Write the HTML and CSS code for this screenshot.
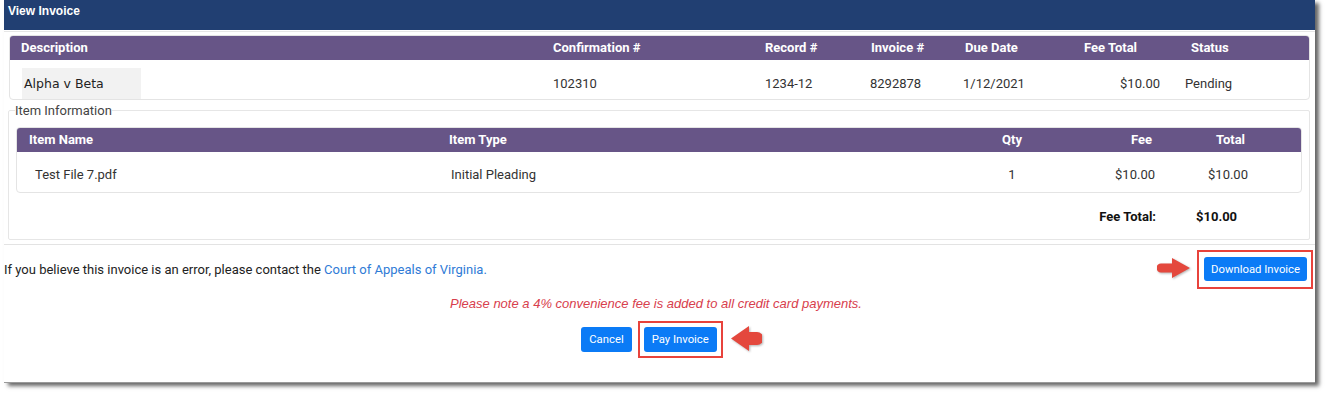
FILE: index.html
```html
<!DOCTYPE html>
<html lang="en">
<head>
    <meta charset="UTF-8">
    <meta name="viewport" content="width=device-width, initial-scale=1.0">
    <title>View Invoice</title>
    <link rel="stylesheet" href="styles.css">
</head>
<body>

<div class="window">
    <!-- Title bar -->
    <div class="title-bar">View Invoice</div>

    <div class="panel">
        <!-- Invoice summary -->
        <div class="card">
            <div class="summary head">
                <div class="c-desc">Description</div>
                <div>Confirmation #</div>
                <div>Record #</div>
                <div class="c-inv">Invoice #</div>
                <div class="c-due">Due Date</div>
                <div class="c-fee">Fee Total</div>
                <div class="c-status">Status</div>
            </div>
            <div class="summary row">
                <div><span class="desc-box">Alpha v Beta</span></div>
                <div>102310</div>
                <div>1234-12</div>
                <div>8292878</div>
                <div>1/12/2021</div>
                <div class="c-fee">$10.00</div>
                <div class="c-status">Pending</div>
            </div>
        </div>

        <!-- Items -->
        <fieldset class="items">
            <legend>Item Information</legend>
            <div class="card">
                <div class="item-grid head">
                    <div class="c-name">Item Name</div>
                    <div class="c-type">Item Type</div>
                    <div class="c-qty">Qty</div>
                    <div class="c-fee">Fee</div>
                    <div class="c-total">Total</div>
                </div>
                <div class="item-grid row">
                    <div class="c-name">Test File 7.pdf</div>
                    <div class="c-type">Initial Pleading</div>
                    <div class="c-qty">1</div>
                    <div class="c-fee">$10.00</div>
                    <div class="c-total">$10.00</div>
                </div>
            </div>
            <div class="item-grid total-row">
                <div></div>
                <div></div>
                <div></div>
                <div class="c-fee">Fee Total:</div>
                <div class="c-sum">$10.00</div>
            </div>
        </fieldset>
    </div>

    <div class="notice-row">
        <p class="notice">If you believe this invoice is an error, please contact the <a href="#contact">Court of Appeals of Virginia.</a></p>
        <span class="callout">
            <svg class="arrow arrow-right" width="34" height="22" viewBox="0 0 34 22">
                <path d="M4 6.5 H15 V1 L33 11 L15 21 V15.5 H4 A4.5 4.5 0 0 1 4 6.5 Z" fill="#e4483d"/>
            </svg>
            <button class="btn">Download Invoice</button>
        </span>
    </div>

    <p class="fee-note">Please note a 4% convenience fee is added to all credit card payments.</p>

    <div class="actions">
        <button class="btn">Cancel</button>
        <span class="callout">
            <button class="btn">Pay Invoice</button>
            <svg class="arrow arrow-left" width="32" height="27" viewBox="0 0 32 27">
                <path d="M1 13.5 L19 1 V7 H27 A6.5 6.5 0 0 1 27 20 H19 V26 Z" fill="#e4483d"/>
            </svg>
        </span>
    </div>
</div>

</body>
</html>
```

FILE: styles.css
```css
body {
    margin: 0;
    padding: 0 0 11px 4px;
    font-family: Roboto, "Liberation Sans", Arial, sans-serif;
    color: #333;
    background: #fff;
}

.window {
    width: 1311px;
    height: 383px;
    box-sizing: border-box;
    background: #fff;
    border-bottom: 1px solid #9a9a9a;
    box-shadow: 4px 3px 4px rgba(0, 0, 0, 0.6);
}

/* Title bar */
.title-bar {
    height: 30px;
    box-sizing: border-box;
    padding: 4px 4px 0;
    background-color: #213f72;
    color: #fff;
    font-family: "Liberation Sans", Arial, sans-serif;
    font-weight: bold;
    font-size: 12px;
    line-height: 15px;
}

.panel {
    margin-top: 1px;
    border-top: 1px solid #e6e6e6;
    border-bottom: 1px solid #e3e3e3;
    padding: 3px 5px 4px 5px;
}

/* Cards and grids */
.card {
    border: 1px solid #e4e4e4;
    border-radius: 4px;
    background: #fff;
}

.head {
    background-color: #675587;
    color: #fff;
    font-weight: bold;
    font-size: 13px;
    line-height: 24px;
    border-radius: 3px 3px 0 0;
}

.row {
    font-size: 13px;
    line-height: 16px;
}

.summary {
    display: grid;
    grid-template-columns: 543px 212px 105px 93px 113px 107px 1fr;
}

.summary.head .c-desc {
    padding-left: 11px;
}

.summary.head .c-inv {
    padding-left: 1px;
}

.summary.head .c-due {
    padding-left: 2px;
}

.summary.head .c-fee {
    padding-left: 8px;
}

.summary.head .c-status {
    padding-left: 8px;
}

.summary.row {
    height: 39px;
    align-items: end;
}

.summary.row > div {
    padding-bottom: 7px;
}

.summary.row > div:first-child {
    padding-bottom: 0;
}

.summary.row .c-fee {
    text-align: right;
    padding-right: 23px;
}

.summary.row .c-status {
    padding-left: 2px;
}

.desc-box {
    display: block;
    margin-left: 12px;
    width: 119px;
    height: 31px;
    box-sizing: border-box;
    padding: 8px 0 0 2px;
    background-color: #f2f2f2;
    font-family: "DejaVu Sans", Verdana, sans-serif;
    font-size: 12.5px;
    color: #222;
}

/* Item information */
.items {
    margin: 3px 0 0 -1px;
    padding: 9px 7px 0 7px;
    border: 1px solid #e6e6e6;
    border-radius: 2px;
}

.items legend {
    padding: 0;
    margin-left: -1px;
    font-size: 13px;
    line-height: 15px;
    color: #444;
}

.item-grid {
    display: grid;
    grid-template-columns: 423px 520px 104px 96px 1fr;
}

.item-grid.row {
    height: 40px;
    box-sizing: border-box;
    padding-top: 15px;
}

.head .c-name {
    padding-left: 12px;
}

.head .c-type {
    padding-left: 9px;
}

.row .c-name {
    padding-left: 18px;
}

.row .c-type {
    padding-left: 11px;
}

.c-qty,
.c-total {
    text-align: center;
}

.item-grid .c-fee {
    text-align: right;
    padding-right: 5px;
}

.item-grid.head .c-fee {
    padding-right: 8px;
}

.item-grid.row .c-total {
    padding-right: 5px;
}

.total-row {
    padding: 14px 1px 12px;
    font-weight: bold;
    font-size: 13px;
    line-height: 20px;
    color: #111;
}

.total-row .c-fee {
    padding-right: 4px;
}

.total-row .c-sum {
    padding-left: 36px;
}

/* Bottom area */
.notice-row {
    display: flex;
    justify-content: space-between;
    align-items: center;
    padding: 5px 2px 0 0;
}

.notice {
    margin: 0;
    font-size: 13px;
    color: #222;
}

.notice a {
    color: #2f7bd6;
    text-decoration: none;
}

.callout {
    position: relative;
    display: inline-block;
    border: 2px solid #e8433c;
    padding: 5px 4px 6px 5px;
}

.btn {
    display: block;
    border: none;
    border-radius: 3px;
    background-color: #0b7bf6;
    color: #fff;
    font-family: Roboto, Arial, sans-serif;
    font-size: 11.3px;
    padding: 0 7px;
    height: 24px;
}

.arrow {
    position: absolute;
    filter: drop-shadow(1px 1px 1px rgba(0, 0, 0, 0.3));
}

.arrow-right {
    left: -42px;
    top: 5px;
}

.arrow-left {
    right: -41px;
    top: 2px;
}

.fee-note {
    margin: 7px 0 0;
    padding-right: 7px;
    text-align: center;
    font-family: "Liberation Sans", Arial, sans-serif;
    font-style: italic;
    font-size: 13px;
    line-height: 15px;
    color: #d8404d;
}

.actions {
    display: flex;
    justify-content: center;
    align-items: center;
    gap: 6px;
    margin-top: 10px;
    padding-right: 15px;
}

.actions .btn {
    height: 25px;
    padding: 0 8px;
}

.actions .callout {
    padding: 4px;
}
```
